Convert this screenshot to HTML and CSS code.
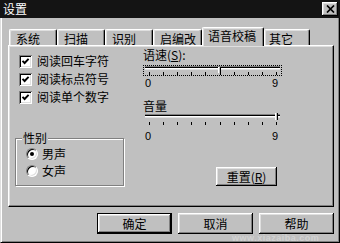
FILE: index.html
```
<!DOCTYPE html>
<html lang="zh-CN">
<head>
<meta charset="utf-8">
<title>设置</title>
<link rel="stylesheet" href="styles.css">
</head>
<body>
<div class="window">
  <div class="titlebar">
    <span class="title">设置</span>
    <button class="close" type="button" aria-label="关闭">
      <svg width="9" height="8" viewBox="0 0 9 8"><path d="M1 0.5 L8 7.5 M8 0.5 L1 7.5" stroke="#000" stroke-width="1.7" fill="none"/></svg>
    </button>
  </div>
  <div class="frame">
    <div class="tabs">
      <div class="tab">系统</div>
      <div class="tab">扫描</div>
      <div class="tab">识别</div>
      <div class="tab wide">启编改</div>
      <div class="tab active">语音校稿</div>
      <div class="tab narrow">其它</div>
    </div>
    <div class="panel">
      <div class="col-left">
        <div class="checks">
          <label class="check"><span class="box"><svg width="9" height="9" viewBox="0 0 9 9"><path d="M1.5 3.8 L3.6 6 L7.6 1.8" stroke="#000" stroke-width="1.9" fill="none"/></svg></span>阅读回车字符</label>
          <label class="check"><span class="box"><svg width="9" height="9" viewBox="0 0 9 9"><path d="M1.5 3.8 L3.6 6 L7.6 1.8" stroke="#000" stroke-width="1.9" fill="none"/></svg></span>阅读标点符号</label>
          <label class="check"><span class="box"><svg width="9" height="9" viewBox="0 0 9 9"><path d="M1.5 3.8 L3.6 6 L7.6 1.8" stroke="#000" stroke-width="1.9" fill="none"/></svg></span>阅读单个数字</label>
        </div>
        <fieldset class="group">
          <legend>性别</legend>
          <label class="radio"><span class="dot on"></span>男声</label>
          <label class="radio"><span class="dot"></span>女声</label>
        </fieldset>
      </div>
      <div class="col-right">
        <div class="lbl">语速(<u>S</u>):</div>
        <div class="slider focus">
          <div class="track"><span class="thumb" style="left:73px"></span></div>
          <div class="ticks"><i></i><i></i><i></i><i></i><i></i><i></i><i></i><i></i><i></i><i></i></div>
        </div>
        <div class="scale"><span>0</span><span>9</span></div>
        <div class="lbl l2">音量</div>
        <div class="slider s2">
          <div class="track"><span class="thumb" style="left:130px"></span></div>
          <div class="ticks"><i></i><i></i><i></i><i></i><i></i><i></i><i></i><i></i><i></i><i></i></div>
        </div>
        <div class="scale"><span>0</span><span>9</span></div>
        <button class="btn reset" type="button">重置(<u>R</u>)</button>
      </div>
    </div>
    <div class="actions">
      <button class="btn default" type="button">确定</button>
      <button class="btn" type="button">取消</button>
      <button class="btn" type="button">帮助</button>
    </div>
  </div>
  <div class="wm-url">www.xiazaiba.com</div>
</div>
</body>
</html>
```
FILE: styles.css
```
html, body {
  margin: 0;
  padding: 0;
  background: #c0c0c0;
}
body {
  font: 12px/14px "Noto Sans CJK SC", "Liberation Sans", sans-serif;
  color: #000;
}
.window {
  width: 340px;
  height: 243px;
  display: flex;
  flex-direction: column;
  position: relative;
  overflow: hidden;
  background: #c0c0c0;
}
.titlebar {
  flex: none;
  height: 18px;
  box-sizing: border-box;
  padding: 0 2px 0 3px;
  background: #141414;
  color: #fff;
  display: flex;
  align-items: center;
  justify-content: space-between;
}
.title {
  line-height: 18px;
}
.close {
  width: 16px;
  height: 14px;
  margin: 0;
  padding: 0;
  border: none;
  background: #c0c0c0;
  box-shadow: inset -1px -1px #000, inset 1px 1px #fff, inset -2px -2px #808080, inset 2px 2px #dfdfdf;
  display: flex;
  align-items: center;
  justify-content: center;
}
.close svg { display: block; }
.frame {
  flex: 1;
  min-height: 0;
  border-style: solid;
  border-width: 0 1px 1px 1px;
  border-color: #dfdfdf #000 #000 #dfdfdf;
  box-shadow: inset 1px 0 #fff, inset -1px -1px #808080;
  display: flex;
  flex-direction: column;
}
.tabs {
  margin-top: 9px;
  height: 18px;
  padding-left: 8px;
  display: flex;
  align-items: flex-end;
}
.tab {
  width: 48px;
  height: 16px;
  box-sizing: border-box;
  padding: 2px 0 0 6px;
  line-height: 14px;
  background: #c0c0c0;
  border-top: 1px solid #fff;
  border-left: 1px solid #fff;
  border-right: 1px solid #000;
  border-radius: 2px 2px 0 0;
  box-shadow: inset -1px 0 #808080, inset 1px 1px #dfdfdf;
}
.tab.wide { width: 49px; }
.tab.narrow { width: 46px; padding-left: 4px; }
.tab.active {
  width: 62px;
  height: 19px;
  margin-bottom: -1px;
  padding: 1px 0 0 5px;
  position: relative;
  z-index: 1;
}
.panel {
  margin: 0 5px 0 7px;
  height: 162px;
  box-sizing: border-box;
  border-style: solid;
  border-width: 1px;
  border-color: #fff #000 #000 #fff;
  box-shadow: inset -1px -1px #808080, inset 1px 1px #dfdfdf;
  display: flex;
}
.col-left {
  width: 124px;
  flex: none;
}
.checks {
  margin-top: 6px;
  padding-left: 10px;
}
.check {
  height: 18px;
  display: flex;
  align-items: center;
}
.box {
  width: 13px;
  height: 13px;
  box-sizing: border-box;
  margin-right: 5px;
  background: #fff;
  box-shadow: inset 1px 1px #808080, inset -1px -1px #fff, inset 2px 2px #000, inset -2px -2px #dfdfdf;
  display: flex;
  align-items: center;
  justify-content: center;
}
.box svg { display: block; }
.group {
  margin: 25px 0 0 6px;
  width: 109px;
  min-inline-size: 0;
  box-sizing: border-box;
  padding: 0 0 6px 6px;
  border: 1px solid #808080;
  box-shadow: inset 1px 1px #fff, 1px 1px #fff;
}
.group legend {
  padding: 0 1px;
  line-height: 14px;
  background: #c0c0c0;
}
.radio {
  height: 17px;
  display: flex;
  align-items: center;
}
.dot {
  width: 12px;
  height: 12px;
  box-sizing: border-box;
  margin: 0 4px 0 4px;
  border-radius: 50%;
  border: 1px solid;
  border-color: #808080 #fff #fff #808080;
  box-shadow: inset 1px 1px #000, inset -1px -1px #dfdfdf;
  background: #fff;
  display: flex;
  align-items: center;
  justify-content: center;
}
.dot.on::after {
  content: "";
  width: 4px;
  height: 4px;
  border-radius: 50%;
  background: #000;
}
.col-right {
  margin-left: 10px;
  width: 139px;
  padding-top: 2px;
}
.lbl {
  line-height: 14px;
}
.lbl u, .reset u {
  text-decoration: underline;
}
.lbl.l2 {
  margin-top: 10px;
}
.slider {
  width: 139px;
  box-sizing: border-box;
  border: 1px dotted transparent;
  padding: 0 1px;
}
.slider.focus {
  margin-top: 3px;
  border-color: #000;
}
.track {
  position: relative;
  height: 4px;
  background: linear-gradient(#808080 0 1px, #000 1px 2px, #fff 2px 3px, #dfdfdf 3px 4px);
}
.thumb {
  position: absolute;
  top: 1px;
  width: 3px;
  height: 6px;
  box-sizing: border-box;
  background: #c0c0c0;
  border-left: 1px solid #fff;
  border-right: 1px solid #000;
}
.s2 .thumb {
  top: -1px;
  height: 7px;
}
.ticks {
  margin-top: 2px;
  height: 3px;
  padding: 0 3px 0 4px;
  display: flex;
  justify-content: space-between;
}
.s2 .ticks {
  margin-top: 4px;
}
.ticks i {
  width: 1px;
  height: 3px;
  background: #000;
}
.scale {
  margin-top: 1px;
  padding: 0 4px 0 2px;
  font: 11px/12px "Liberation Sans", sans-serif;
  display: flex;
  justify-content: space-between;
}
.s2 + .scale {
  margin-top: 4px;
}
.btn {
  margin: 0;
  padding: 0;
  font: inherit;
  color: #000;
  border: none;
  background: #c0c0c0;
  box-shadow: inset -1px -1px #000, inset 1px 1px #fff, inset -2px -2px #808080, inset 2px 2px #dfdfdf;
  display: flex;
  align-items: center;
  justify-content: center;
}
.reset {
  margin: 25px 0 0 73px;
  width: 61px;
  height: 19px;
}
.actions {
  margin-top: 6px;
  padding-right: 5px;
  display: flex;
  justify-content: flex-end;
  gap: 6px;
}
.actions .btn {
  width: 75px;
  height: 21px;
}
.actions .btn.default {
  box-shadow: inset 0 0 0 1px #000, inset -2px -2px #000, inset 2px 2px #fff, inset -3px -3px #808080, inset 3px 3px #dfdfdf;
}
.wm-url {
  position: absolute;
  left: 232px;
  top: 234px;
  font: bold 9px/9px "Liberation Sans", sans-serif;
  letter-spacing: 0.5px;
  color: rgba(255, 255, 255, 0.3);
  pointer-events: none;
  white-space: nowrap;
}
```
